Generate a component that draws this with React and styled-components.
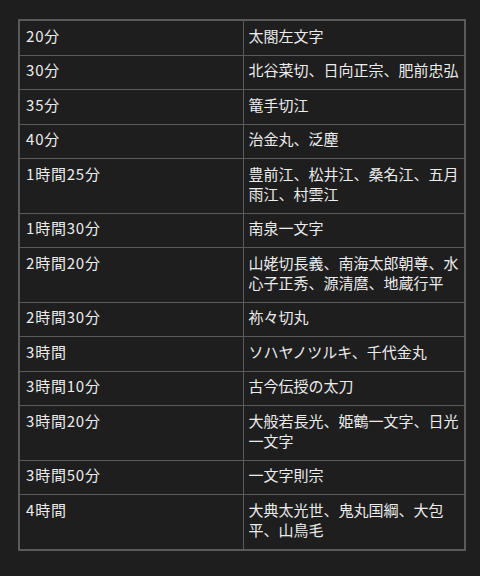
import React from 'react'
import styled, { createGlobalStyle } from 'styled-components'

const rows = [
  ['20分', '太閤左文字'],
  ['30分', '北谷菜切、日向正宗、肥前忠弘'],
  ['35分', '篭手切江'],
  ['40分', '治金丸、泛塵'],
  ['1時間25分', '豊前江、松井江、桑名江、五月雨江、村雲江'],
  ['1時間30分', '南泉一文字'],
  ['2時間20分', '山姥切長義、南海太郎朝尊、水心子正秀、源清麿、地蔵行平'],
  ['2時間30分', '祢々切丸'],
  ['3時間', 'ソハヤノツルキ、千代金丸'],
  ['3時間10分', '古今伝授の太刀'],
  ['3時間20分', '大般若長光、姫鶴一文字、日光一文字'],
  ['3時間50分', '一文字則宗'],
  ['4時間', '大典太光世、鬼丸国綱、大包平、山鳥毛'],
]

const App = () => {
  return (
    <>
      <GlobalStyle />
      <Page>
        <Table>
          <colgroup>
            <col style={{ width: 224 }} />
            <col style={{ width: 222 }} />
          </colgroup>
          <tbody>
            {rows.map(([time, names]) => (
              <Row key={time}>
                <Cell $time>{time}</Cell>
                <Cell>{names}</Cell>
              </Row>
            ))}
          </tbody>
        </Table>
      </Page>
    </>
  )
}

const GlobalStyle = createGlobalStyle`
  html, body {
    margin: 0;
    background: #1e1e1e;
  }
  body {
    font-family: "Noto Sans CJK JP", "Noto Sans", sans-serif;
    color: #e6e6e6;
  }
`

const Page = styled.div`
  width: 480px;
  height: 576px;
  box-sizing: border-box;
  padding: 19px 16px 0 18px;
  background: #1e1e1e;
`

const Table = styled.table`
  width: 446px;
  table-layout: fixed;
  border-collapse: collapse;
  border: 2px solid #5a5a5a;
`

const Row = styled.tr`
  background: #1e1e1e;
`

const Cell = styled.td`
  border: 1px solid #5a5a5a;
  padding: ${p => (p.$time ? '4.5px 6px 9px 6px' : '4.5px 5px 9px 5px')};
  vertical-align: top;
  font-size: 15px;
  line-height: 20px;
  letter-spacing: ${p => (p.$time ? '0.8px' : '0')};
  color: #ececec;
  line-break: strict;
`

export default App
